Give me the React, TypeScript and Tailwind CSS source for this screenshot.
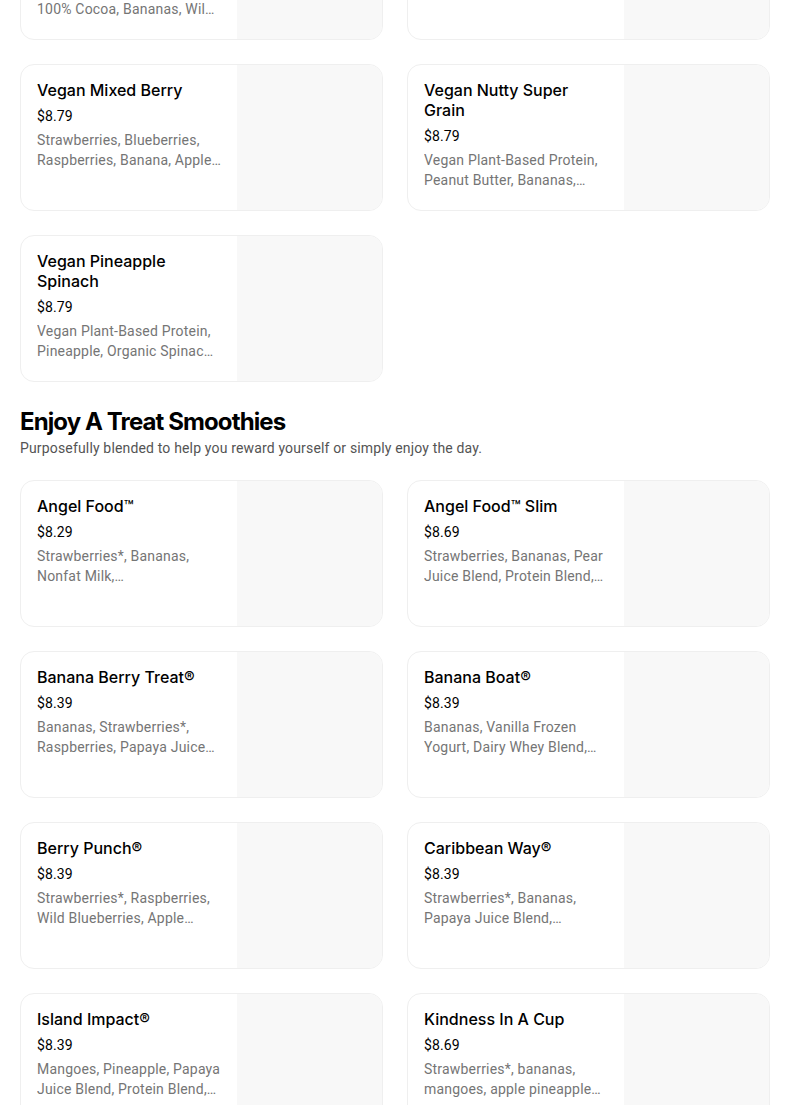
import React from "react";

type Item = { title: string; price: string; lines: [string, string] };

const vegan: Item[] = [
  { title: "Vegan Chocolate Super Grain", price: "$8.79", lines: ["Vegan Plant-Based Protein,", "100% Cocoa, Bananas, Wil…"] },
  { title: "Vegan Go Nutty", price: "$8.79", lines: ["Vegan Plant-Based Protein,", "Peanut Butter, Bananas…"] },
  { title: "Vegan Mixed Berry", price: "$8.79", lines: ["Strawberries, Blueberries,", "Raspberries, Banana, Apple…"] },
  { title: "Vegan Nutty Super Grain", price: "$8.79", lines: ["Vegan Plant-Based Protein,", "Peanut Butter, Bananas,…"] },
  { title: "Vegan Pineapple Spinach", price: "$8.79", lines: ["Vegan Plant-Based Protein,", "Pineapple, Organic Spinac…"] },
];

const treats: Item[] = [
  { title: "Angel Food™", price: "$8.29", lines: ["Strawberries*, Bananas,", "Nonfat Milk,…"] },
  { title: "Angel Food™ Slim", price: "$8.69", lines: ["Strawberries, Bananas, Pear", "Juice Blend, Protein Blend,…"] },
  { title: "Banana Berry Treat®", price: "$8.39", lines: ["Bananas, Strawberries*,", "Raspberries, Papaya Juice…"] },
  { title: "Banana Boat®", price: "$8.39", lines: ["Bananas, Vanilla Frozen", "Yogurt, Dairy Whey Blend,…"] },
  { title: "Berry Punch®", price: "$8.39", lines: ["Strawberries*, Raspberries,", "Wild Blueberries, Apple…"] },
  { title: "Caribbean Way®", price: "$8.39", lines: ["Strawberries*, Bananas,", "Papaya Juice Blend,…"] },
  { title: "Island Impact®", price: "$8.39", lines: ["Mangoes, Pineapple, Papaya", "Juice Blend, Protein Blend,…"] },
  { title: "Kindness In A Cup", price: "$8.69", lines: ["Strawberries*, bananas,", "mangoes, apple pineapple…"] },
];

function Card({ item }: { item: Item }) {
  return (
    <div className="flex h-[147px] overflow-hidden rounded-[14px] border border-[#efefef] bg-white">
      <div className="flex-1 min-w-0 pt-[15px] pl-4 pr-4">
        <div className="text-[16px] leading-5 font-medium text-black font-['Inter',sans-serif]">{item.title}</div>
        <div className="mt-[6px] text-[14px] leading-5 text-black tracking-[0.1px]">{item.price}</div>
        <div className="mt-1 text-[14px] leading-5 text-[#757575] tracking-[0.2px]">
          <div className="whitespace-nowrap overflow-hidden">{item.lines[0]}</div>
          <div className="whitespace-nowrap overflow-hidden">{item.lines[1]}</div>
        </div>
      </div>
      <div className="w-[145px] shrink-0 bg-[#f8f8f8]" />
    </div>
  );
}

export default function App() {
  return (
    <div className="min-h-[1105px] overflow-hidden bg-white px-5 font-['Roboto',sans-serif]">
      <div className="-mt-[107px] grid grid-cols-2 gap-6 w-[750px]">
        {vegan.map((it) => (
          <Card key={it.title} item={it} />
        ))}
      </div>
      <div className="mt-6">
        <h2 className="text-[24px] leading-8 font-bold text-black tracking-[-0.9px] font-['Inter',sans-serif]">
          Enjoy A Treat Smoothies
        </h2>
        <p className="text-[14px] leading-5 text-[#545454] tracking-[0.16px]">
          Purposefully blended to help you reward yourself or simply enjoy the day.
        </p>
      </div>
      <div className="mt-[22px] grid grid-cols-2 gap-6 w-[750px] pb-6">
        {treats.map((it) => (
          <Card key={it.title} item={it} />
        ))}
      </div>
    </div>
  );
}
